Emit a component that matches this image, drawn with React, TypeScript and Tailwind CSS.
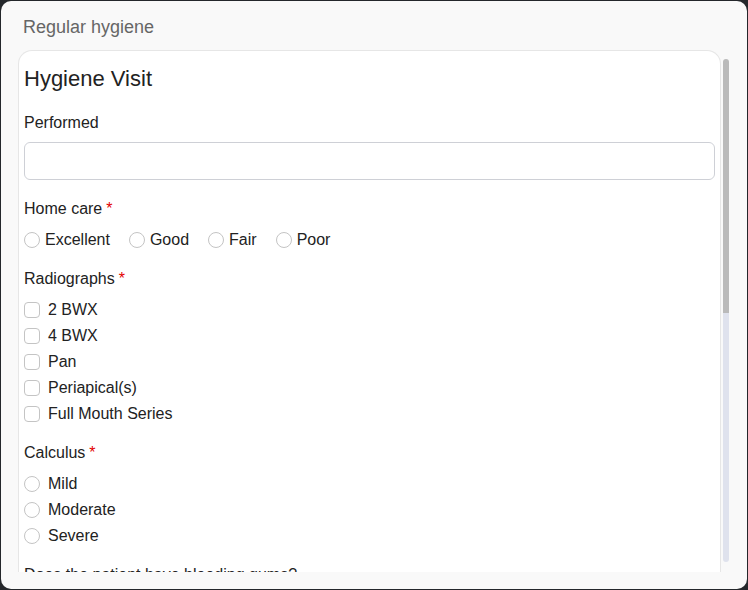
import React from 'react';

const font = { fontFamily: '"Liberation Sans", Arial, sans-serif' };

function Required() {
  return <span className="ml-1 text-[#e30000]">*</span>;
}

function Label({ text, required }: { text: string; required?: boolean }) {
  return (
    <div className="h-6 text-base leading-6 text-[#222]">
      {text}
      {required && <Required />}
    </div>
  );
}

function Radio({ label, gap = 'gap-[5px]' }: { label: string; gap?: string }) {
  return (
    <label className={`flex h-6 items-center ${gap} text-base leading-6 text-[#222]`}>
      <span className="h-4 w-4 shrink-0 rounded-full border border-[#c4c4c4] bg-white" />
      {label}
    </label>
  );
}

function Checkbox({ label }: { label: string }) {
  return (
    <label className="flex h-6 items-center gap-2 text-base leading-6 text-[#222]">
      <span className="h-4 w-4 shrink-0 rounded-[4px] border border-[#c4c4c4] bg-white" />
      {label}
    </label>
  );
}

export default function App() {
  const radiographs = ['2 BWX', '4 BWX', 'Pan', 'Periapical(s)', 'Full Mouth Series'];
  const calculus = ['Mild', 'Moderate', 'Severe'];

  return (
    <div className="h-[590px] w-[748px] bg-[#24272b] p-px" style={font}>
      <div className="flex h-full flex-col rounded-[10px] bg-[#f9f9f9]">
        <div className="h-[49px] pl-[22px] pt-[14px] text-[18px] leading-6 text-[#666]">
          Regular hygiene
        </div>
        <div className="mx-[17px] flex h-[522px]">
          <div className="flex-1 overflow-hidden rounded-t-[14px] border border-b-0 border-[#e6e6e6] bg-white px-[5px] pt-[14px]">
            <h2 className="h-7 text-[22px] leading-7 text-[#222]">Hygiene Visit</h2>

            <div className="mt-[18px]">
              <Label text="Performed" />
              <div className="mt-[7px] h-[38px] rounded-[6px] border border-[#ced0d6] bg-white" />
            </div>

            <div className="mt-[17px]">
              <Label text="Home care" required />
              <div className="mt-[7px] flex gap-[19px]">
                <Radio label="Excellent" />
                <Radio label="Good" />
                <Radio label="Fair" />
                <Radio label="Poor" />
              </div>
            </div>

            <div className="mt-[15px]">
              <Label text="Radiographs" required />
              <div className="mt-[7px] flex flex-col gap-[2px]">
                {radiographs.map((r) => (
                  <Checkbox key={r} label={r} />
                ))}
              </div>
            </div>

            <div className="mt-[15px]">
              <Label text="Calculus" required />
              <div className="mt-[7px] flex flex-col gap-[2px]">
                {calculus.map((c) => (
                  <Radio key={c} label={c} gap="gap-2" />
                ))}
              </div>
            </div>

            <div className="mt-[15px]">
              <Label text="Does the patient have bleeding gums?" />
            </div>
          </div>

          <div className="flex w-[9px] flex-col pb-[10px] pl-[2px] pt-[9px]">
            <div className="h-[254px] w-[6px] rounded-t-full bg-[#bababa]" />
            <div className="w-[6px] flex-1 rounded-b-full bg-[#dfe2ed]" />
          </div>
        </div>
      </div>
    </div>
  );
}
